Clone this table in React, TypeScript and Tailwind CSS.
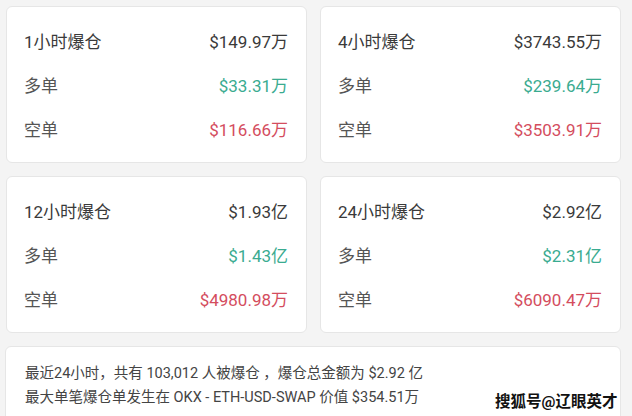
import React from "react";

type Card = { title: string; total: string; long: string; short: string };

const cards: Card[] = [
  { title: "1小时爆仓", total: "$149.97万", long: "$33.31万", short: "$116.66万" },
  { title: "4小时爆仓", total: "$3743.55万", long: "$239.64万", short: "$3503.91万" },
  { title: "12小时爆仓", total: "$1.93亿", long: "$1.43亿", short: "$4980.98万" },
  { title: "24小时爆仓", total: "$2.92亿", long: "$2.31亿", short: "$6090.47万" },
];

const font = { fontFamily: 'Roboto, "Noto Sans CJK SC", sans-serif' };

function StatCard({ c }: { c: Card }) {
  return (
    <div className="bg-white border border-[#e6e6e6] rounded-[6px] pt-[13px] pb-[9px] pl-[17px] pr-[18px] h-[157px]">
      <div className="flex justify-between items-center h-[45px] text-[17px] text-[#3a3a3a]">
        <span>{c.title}</span>
        <span>{c.total}</span>
      </div>
      <div className="flex justify-between items-center h-[44px] text-[17px]">
        <span className="text-[#555]">多单</span>
        <span className="text-[#3aab90]">{c.long}</span>
      </div>
      <div className="flex justify-between items-center h-[44px] text-[17px]">
        <span className="text-[#555]">空单</span>
        <span className="text-[#d44d5e]">{c.short}</span>
      </div>
    </div>
  );
}

export default function App() {
  return (
    <div className="w-[632px] h-[416px] overflow-hidden bg-[#f4f4f4] pt-[6px] pl-[6px] pr-[11px]" style={font}>
      <div className="grid grid-cols-2 gap-[13px]">
        {cards.map((c) => (
          <StatCard key={c.title} c={c} />
        ))}
      </div>
      <div className="relative mt-[13px] -ml-[1px] bg-white border border-[#e6e6e6] rounded-[6px] h-[90px] pt-[15px] pl-[19px] text-[14.5px] leading-[24px] text-[#444]">
        <div>最近24小时，共有 103,012 人被爆仓 ，爆仓总金额为 $2.92 亿</div>
        <div>最大单笔爆仓单发生在 OKX - ETH-USD-SWAP 价值 $354.51万</div>
        <div
          className="absolute left-[489px] top-[43px] whitespace-nowrap text-[15.5px] leading-[24px] font-bold text-[#111]"
          style={{ textShadow: "0 0 2px #fff, 0 0 2px #fff, 0 0 2px #fff" }}
        >
          搜狐号@辽眼英才
        </div>
      </div>
    </div>
  );
}
